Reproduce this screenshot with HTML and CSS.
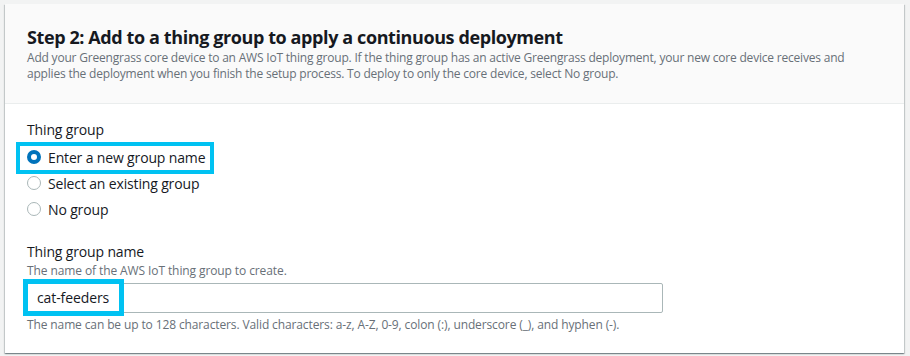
FILE: index.html
```html
<!DOCTYPE html>
<html lang="en">
<head>
<meta charset="utf-8">
<title>Step 2</title>
<link rel="stylesheet" href="styles.css">
</head>
<body>
<div class="card">
  <div class="card-header">
    <h2 class="title">Step 2: Add to a thing group to apply a continuous deployment</h2>
    <p class="desc">Add your Greengrass core device to an AWS IoT thing group. If the thing group has an active Greengrass deployment, your new core device receives and applies the deployment when you finish the setup process. To deploy to only the core device, select No group.</p>
  </div>
  <div class="card-body">
    <div class="field">
      <div class="label">Thing group</div>
      <div class="radios">
        <label class="radio-row"><span class="radio checked"></span><span>Enter a new group name</span><span class="mark mark-radio"></span></label>
        <label class="radio-row"><span class="radio"></span><span>Select an existing group</span></label>
        <label class="radio-row"><span class="radio"></span><span>No group</span></label>
      </div>
    </div>
    <div class="field field-name">
      <div class="label">Thing group name</div>
      <div class="field-desc">The name of the AWS IoT thing group to create.</div>
      <div class="input-wrap">
        <div class="input">cat-feeders</div>
        <span class="mark mark-input"></span>
      </div>
      <div class="hint">The name can be up to 128 characters. Valid characters: a-z, A-Z, 0-9, colon (:), underscore (_), and hyphen (-).</div>
    </div>
  </div>
</div>
</body>
</html>
```

FILE: styles.css
```css
html, body {
  margin: 0;
  padding: 0;
}
body {
  background: #f2f3f3;
  padding: 4px 6px 3px 5px;
  font-family: "Open Sans", "Noto Sans", sans-serif;
  color: #16191f;
  width: 910px;
  height: 356px;
  box-sizing: border-box;
}
.card {
  background: #ffffff;
  box-shadow: 0 1px 1px 0 rgba(0, 28, 36, 0.3), 1px 1px 1px 0 rgba(0, 28, 36, 0.15), -1px 1px 1px 0 rgba(0, 28, 36, 0.15);
}
.card-header {
  background: #fafafa;
  border-bottom: 1px solid #eaeded;
  padding: 22px 20px 21px 22px;
}
.title {
  margin: 0 0 2px 0;
  font-size: 18px;
  line-height: 22px;
  font-weight: 700;
  letter-spacing: -0.4px;
}
.desc {
  margin: 0;
  font-size: 12px;
  line-height: 16px;
  color: #687078;
  letter-spacing: -0.2px;
}
.card-body {
  padding: 15px 20px 20px 22px;
}
.label {
  font-size: 14px;
  line-height: 22px;
  letter-spacing: -0.15px;
}
.radios {
  display: flex;
  flex-direction: column;
  margin-top: 3px;
}
.radio-row {
  position: relative;
  display: flex;
  align-items: center;
  gap: 7px;
  height: 26px;
  font-size: 14px;
  letter-spacing: -0.15px;
  width: max-content;
}
.radio {
  width: 12px;
  height: 12px;
  border: 1px solid #aab7b8;
  border-radius: 50%;
  box-sizing: content-box;
  background: #fff;
}
.radio.checked {
  width: 6px;
  height: 6px;
  border: 4px solid #0073bb;
}
.mark {
  position: absolute;
  border: 4px solid #00c2f2;
  pointer-events: none;
}
.mark-radio {
  left: -11px;
  right: -9px;
  top: -2px;
  bottom: -4px;
}
.field-name {
  margin-top: 19px;
}
.field-desc {
  font-size: 12px;
  line-height: 16px;
  color: #687078;
  letter-spacing: -0.1px;
}
.input-wrap {
  position: relative;
  margin-top: 4px;
  width: 639px;
  margin-left: -3px;
}
.input {
  height: 28px;
  border: 1px solid #aab7b8;
  border-radius: 2px;
  padding: 0 12px;
  font-size: 14px;
  line-height: 28px;
  letter-spacing: -0.1px;
}
.mark-input {
  left: -1px;
  top: -4px;
  width: 91px;
  height: 27px;
  border-width: 5px;
}
.hint {
  font-size: 12px;
  line-height: 16px;
  color: #687078;
  margin-top: 4px;
  letter-spacing: -0.12px;
}
```
